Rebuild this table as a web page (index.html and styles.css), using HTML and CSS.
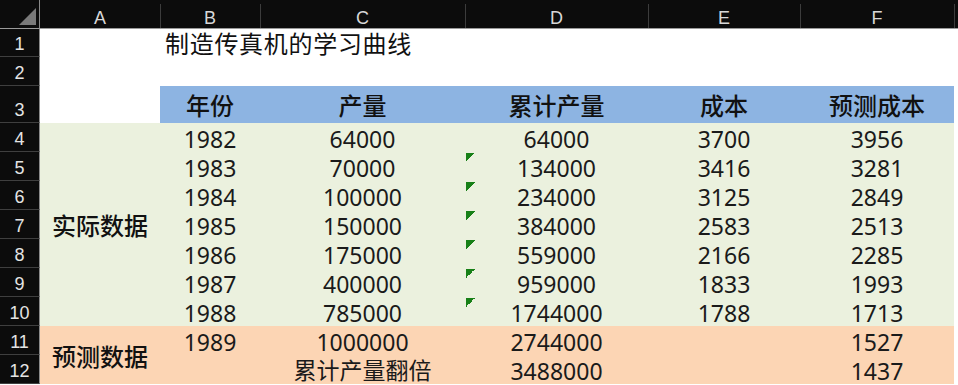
FILE: index.html
```html
<!DOCTYPE html>
<html lang="zh-CN">
<head>
<meta charset="utf-8">
<title>制造传真机的学习曲线</title>
<link rel="stylesheet" href="styles.css">
</head>
<body>
<div class="sheet">
  <div class="corner"><svg width="40" height="28" viewBox="0 0 40 28"><polygon points="36,8 36,25 19,25" fill="#7a7a7a"/></svg></div>
  <div class="colh">A</div>
  <div class="colh">B</div>
  <div class="colh">C</div>
  <div class="colh">D</div>
  <div class="colh">E</div>
  <div class="colh">F</div>
  <div class="colh end"></div>

  <div class="rowh">1</div>
  <div class="cell"></div>
  <div class="cell title">制造传真机的学习曲线</div>

  <div class="rowh">2</div>
  <div class="cell span-all"></div>

  <div class="rowh r3">3</div>
  <div class="cell"></div>
  <div class="cell head">年份</div>
  <div class="cell head">产量</div>
  <div class="cell head">累计产量</div>
  <div class="cell head">成本</div>
  <div class="cell head">预测成本</div>
  <div class="cell"></div>

  <div class="rowh">4</div>
  <div class="cell green label actual">实际数据</div>
  <div class="cell green num">1982</div>
  <div class="cell green num">64000</div>
  <div class="cell green num">64000</div>
  <div class="cell green num">3700</div>
  <div class="cell green num">3956</div>
  <div class="cell"></div>

  <div class="rowh">5</div>
  <div class="cell green num">1983</div>
  <div class="cell green num">70000</div>
  <div class="cell green num flag">134000</div>
  <div class="cell green num">3416</div>
  <div class="cell green num">3281</div>
  <div class="cell"></div>

  <div class="rowh">6</div>
  <div class="cell green num">1984</div>
  <div class="cell green num">100000</div>
  <div class="cell green num flag">234000</div>
  <div class="cell green num">3125</div>
  <div class="cell green num">2849</div>
  <div class="cell"></div>

  <div class="rowh">7</div>
  <div class="cell green num">1985</div>
  <div class="cell green num">150000</div>
  <div class="cell green num flag">384000</div>
  <div class="cell green num">2583</div>
  <div class="cell green num">2513</div>
  <div class="cell"></div>

  <div class="rowh">8</div>
  <div class="cell green num">1986</div>
  <div class="cell green num">175000</div>
  <div class="cell green num flag">559000</div>
  <div class="cell green num">2166</div>
  <div class="cell green num">2285</div>
  <div class="cell"></div>

  <div class="rowh">9</div>
  <div class="cell green num">1987</div>
  <div class="cell green num">400000</div>
  <div class="cell green num flag">959000</div>
  <div class="cell green num">1833</div>
  <div class="cell green num">1993</div>
  <div class="cell"></div>

  <div class="rowh">10</div>
  <div class="cell green num">1988</div>
  <div class="cell green num">785000</div>
  <div class="cell green num flag">1744000</div>
  <div class="cell green num">1788</div>
  <div class="cell green num">1713</div>
  <div class="cell"></div>

  <div class="rowh">11</div>
  <div class="cell orange label forecast">预测数据</div>
  <div class="cell orange num">1989</div>
  <div class="cell orange num">1000000</div>
  <div class="cell orange num">2744000</div>
  <div class="cell orange"></div>
  <div class="cell orange num">1527</div>
  <div class="cell"></div>

  <div class="rowh">12</div>
  <div class="cell orange"></div>
  <div class="cell orange note">累计产量翻倍</div>
  <div class="cell orange num">3488000</div>
  <div class="cell orange"></div>
  <div class="cell orange num">1437</div>
  <div class="cell"></div>
</div>
</body>
</html>
```
FILE: styles.css
```css
html, body {
  margin: 0;
  padding: 0;
  background: #ffffff;
}

.sheet {
  display: grid;
  grid-template-columns: 40px 120px 100px 205px 183px 152px 154px 1fr;
  grid-template-rows: 29px 28px 29px 37px repeat(9, 29px);
  width: 958px;
  height: 385px;
  overflow: hidden;
  background: #ffffff;
  font-family: "Noto Sans CJK SC", "Noto Sans", sans-serif;
  color: #1a1a1a;
}

.corner {
  background: #0c0c0c;
  border-right: 1px solid #8a8a8a;
  border-bottom: 1px solid #9a9a9a;
  box-sizing: border-box;
}

.corner svg {
  display: block;
}

.colh {
  background:
    linear-gradient(#3c3c3c, #3c3c3c) left 4px / 1px calc(100% - 4px) no-repeat,
    #0c0c0c;
  border-bottom: 1px solid #9a9a9a;
  box-sizing: border-box;
  color: #d8d8d8;
  font-family: "Liberation Sans", Arial, sans-serif;
  font-size: 18px;
  line-height: 20px;
  padding-top: 8px;
  text-align: center;
}

.colh:nth-child(2) {
  background: #0c0c0c;
}

.rowh {
  grid-column: 1;
  background: #0c0c0c;
  border-right: 1px solid #8a8a8a;
  border-bottom: 1px solid #3f3f3f;
  box-sizing: border-box;
  color: #e4e4e4;
  font-family: "Liberation Sans", Arial, sans-serif;
  font-size: 18px;
  line-height: 19px;
  display: flex;
  align-items: flex-end;
  justify-content: center;
  padding-bottom: 2px;
}

.cell {
  min-width: 0;
  white-space: nowrap;
}

.span-all {
  grid-column: 2 / -1;
}

.title {
  grid-column: 3 / -1;
  font-size: 24px;
  letter-spacing: 0.7px;
  line-height: 28px;
  padding-left: 5px;
  color: #111111;
}

.head {
  background: #8db4e2;
  font-size: 24px;
  font-weight: 500;
  line-height: 37px;
  text-align: center;
  color: #111111;
}

.green {
  background: #ebf1de;
}

.orange {
  background: #fcd5b4;
}

.num {
  font-family: "Noto Sans", sans-serif;
  font-size: 23px;
  line-height: 25px;
  padding-top: 4px;
  text-align: center;
  color: #1a1a1a;
}

.flag {
  background:
    linear-gradient(135deg, #178017 50%, transparent 50%) 1px 1px / 9px 9px no-repeat,
    #ebf1de;
}

.label {
  display: flex;
  align-items: center;
  justify-content: center;
  font-size: 24px;
  font-weight: 500;
  color: #111111;
}

.actual {
  grid-row: span 7;
}

.forecast {
  grid-row: span 2;
}

.note {
  font-size: 23px;
  line-height: 29px;
  text-align: center;
  color: #1a1a1a;
}
```
